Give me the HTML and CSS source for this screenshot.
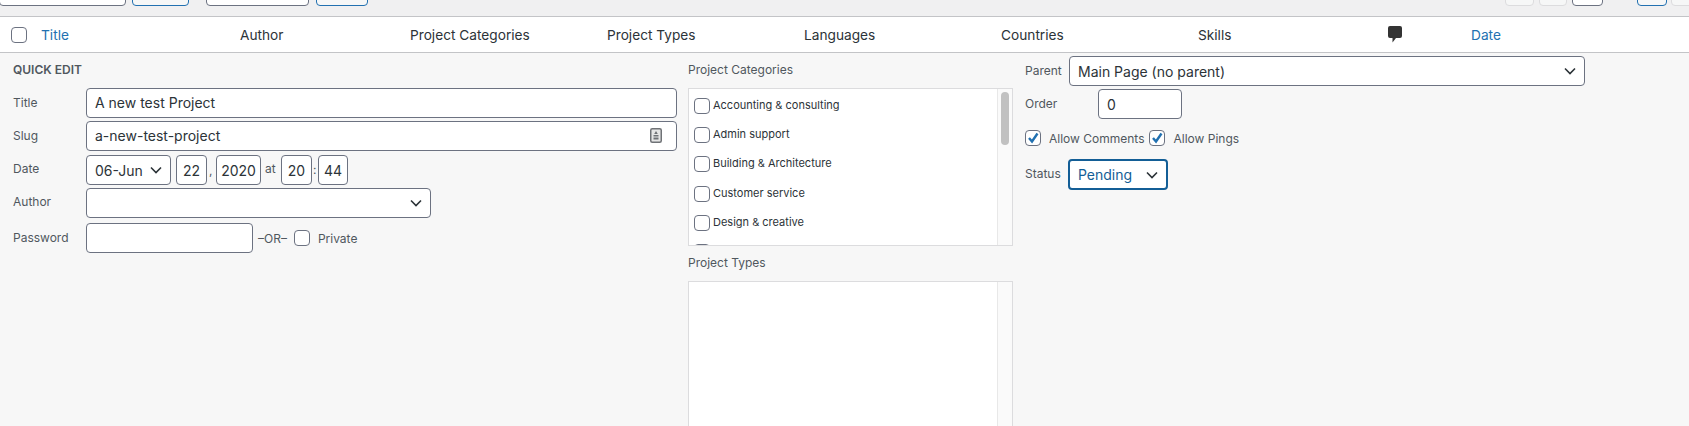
FILE: index.html
```html
<!DOCTYPE html>
<html lang="en">
<head>
    <meta charset="UTF-8">
    <meta name="viewport" content="width=device-width, initial-scale=1.0">
    <title>Projects - Quick Edit</title>
    <link rel="stylesheet" href="styles.css">
</head>
<body>
    <div class="toolbar">
        <span class="tool tool-search"></span>
        <span class="tool tool-btn tool-btn-a"></span>
        <span class="tool tool-date"></span>
        <span class="tool tool-btn tool-btn-b"></span>
        <span class="tool tool-off tool-page-a"></span>
        <span class="tool tool-off tool-page-b"></span>
        <span class="tool tool-current"></span>
        <span class="tool tool-btn tool-next"></span>
        <span class="tool tool-off tool-last"></span>
    </div>

    <div class="list-head">
        <span class="head-check"><input type="checkbox" class="check"></span>
        <a href="#" class="head-link">Title</a>
        <span>Author</span>
        <span>Project Categories</span>
        <span>Project Types</span>
        <span>Languages</span>
        <span>Countries</span>
        <span>Skills</span>
        <span class="head-comment">
            <svg width="14" height="17" viewBox="0 0 14 17"><path d="M2 0h10a2 2 0 0 1 2 2v8a2 2 0 0 1-2 2H8l-3.500 4.500V12H2a2 2 0 0 1-2-2V2a2 2 0 0 1 2-2z" fill="#333"/></svg>
        </span>
        <a href="#" class="head-link">Date</a>
    </div>

    <form class="quick-edit">
        <div class="col col-main">
            <h4 class="qe-title">QUICK EDIT</h4>
            <div class="row row-title">
                <label class="row-label">Title</label>
                <input type="text" class="field field-full" value="A new test Project">
            </div>
            <div class="row row-slug">
                <label class="row-label">Slug</label>
                <div class="slug-wrap">
                    <input type="text" class="field field-full" value="a-new-test-project">
                    <svg class="slug-icon" width="12" height="15" viewBox="0 0 12 15">
                        <rect x="0.750" y="0.750" width="10.500" height="13.500" rx="1.500" fill="#e6e6e6" stroke="#6f7276" stroke-width="1.500"/>
                        <path d="M6 3l1.800 3H4.200z" fill="#6f7276"/>
                        <rect x="3.500" y="7" width="5" height="1.500" fill="#6f7276"/>
                        <rect x="3.500" y="9.500" width="5" height="2" fill="#6f7276"/>
                    </svg>
                </div>
            </div>
            <div class="row row-date">
                <label class="row-label">Date</label>
                <select class="field select select-month"><option>06-Jun</option></select>
                <input type="text" class="field num num-day" value="22">
                <span class="sep sep-comma">,</span>
                <input type="text" class="field num num-year" value="2020">
                <span class="sep sep-at">at</span>
                <input type="text" class="field num num-hour" value="20">
                <span class="sep sep-colon">:</span>
                <input type="text" class="field num num-min" value="44">
            </div>
            <div class="row row-author">
                <label class="row-label">Author</label>
                <select class="field select select-author"></select>
            </div>
            <div class="row">
                <label class="row-label">Password</label>
                <input type="text" class="field field-pass">
                <span class="or">–OR–</span>
                <input type="checkbox" class="check">
                <span class="check-label">Private</span>
            </div>
        </div>

        <div class="col col-tax">
            <div class="tax-label">Project Categories</div>
            <div class="tax-box tax-box-top">
                <ul class="tax-list">
                    <li><input type="checkbox" class="check"><span>Accounting &amp; consulting</span></li>
                    <li><input type="checkbox" class="check"><span>Admin support</span></li>
                    <li><input type="checkbox" class="check"><span>Building &amp; Architecture</span></li>
                    <li><input type="checkbox" class="check"><span>Customer service</span></li>
                    <li><input type="checkbox" class="check"><span>Design &amp; creative</span></li>
                    <li><input type="checkbox" class="check"></li>
                </ul>
                <div class="scroll"><div class="scroll-thumb"></div></div>
            </div>
            <div class="tax-label tax-label-second">Project Types</div>
            <div class="tax-box tax-box-bottom">
                <div class="tax-list"></div>
                <div class="scroll"></div>
            </div>
        </div>

        <div class="col col-side">
            <div class="side-row side-parent">
                <label class="side-label side-label-parent">Parent</label>
                <select class="field select select-parent"><option>Main Page (no parent)</option></select>
            </div>
            <div class="side-row side-order">
                <label class="side-label side-label-order">Order</label>
                <input type="text" class="field field-order" value="0">
            </div>
            <div class="side-row side-checks">
                <input type="checkbox" class="check" checked>
                <span class="check-label label-comments">Allow Comments</span>
                <input type="checkbox" class="check" checked>
                <span class="check-label">Allow Pings</span>
            </div>
            <div class="side-row">
                <label class="side-label side-label-status">Status</label>
                <select class="field select select-status"><option>Pending</option></select>
            </div>
        </div>
    </form>
</body>
</html>
```

FILE: styles.css
```css
* {
    box-sizing: border-box;
}
html, body {
    height: 426px;
    overflow: hidden;
}
body {
    margin: 0;
    background: #f7f7f7;
    font-family: Inter, "Liberation Sans", sans-serif;
    font-size: 13.700px;
    color: #2c3338;
}

/* top toolbar, cut by the top edge */
.toolbar {
    display: flex;
    align-items: flex-end;
    height: 17px;
    padding-bottom: 10px;
    background: #f0f0f1;
    border-bottom: 1px solid #c3c4c7;
}
.tool {
    flex: none;
    height: 30px;
    border: 1px solid #6c7281;
    border-radius: 4px;
    background: #fff;
}
.tool-search { width: 127px; margin-left: -1px; }
.tool-btn {
    border-color: #2271b1;
    background: #f6f7f7;
}
.tool-btn-a { width: 57px; margin-left: 6px; }
.tool-date { width: 103px; margin-left: 17px; }
.tool-btn-b { width: 52px; margin-left: 7px; }
.tool-off {
    border-color: #dcdcde;
    background: #f6f7f7;
}
.tool-page-a { width: 29px; margin-left: 1137px; }
.tool-page-b { width: 28px; margin-left: 5px; }
.tool-current { width: 31px; margin-left: 5px; }
.tool-next { width: 30px; margin-left: 34px; }
.tool-last { width: 60px; margin-left: 4px; }

/* column headers */
.list-head {
    display: grid;
    grid-template-columns: 41px 199px 170px 197px 197px 197px 197px 190px 83px 1fr;
    align-items: center;
    height: 36px;
    background: #fff;
    border-bottom: 1px solid #c3c4c7;
}
.head-check {
    display: flex;
    padding-left: 11px;
}
.head-link {
    color: #2271b1;
    text-decoration: none;
}
.head-comment {
    display: flex;
}

/* form controls */
.field {
    height: 30px;
    padding: 0 8px;
    border: 1px solid #6c7281;
    border-radius: 4px;
    background: #fff;
    font-family: inherit;
    font-size: 14px;
    color: #2c3338;
    outline: none;
}
.select {
    appearance: none;
    padding-right: 24px;
    background-image: url("data:image/svg+xml,%3Csvg xmlns='http://www.w3.org/2000/svg' width='12' height='8' viewBox='0 0 12 8'%3E%3Cpath d='M1 1.500l5 5 5-5' fill='none' stroke='%232c3338' stroke-width='1.600'/%3E%3C/svg%3E");
    background-repeat: no-repeat;
    background-position: right 8px center;
}
.check {
    appearance: none;
    flex: none;
    width: 16px;
    height: 16px;
    margin: 0;
    border: 1px solid #6c7281;
    border-radius: 4px;
    background: #fff;
}
.check:checked {
    background-image: url("data:image/svg+xml,%3Csvg xmlns='http://www.w3.org/2000/svg' width='14' height='14' viewBox='0 0 14 14'%3E%3Cpath d='M3 7l3 3.500 5.500-8' fill='none' stroke='%232271b1' stroke-width='2.400'/%3E%3C/svg%3E");
    background-repeat: no-repeat;
    background-position: center;
}
.check-label {
    margin-left: 8px;
    font-size: 12px;
    color: #50575e;
}

/* quick edit panel */
.quick-edit {
    display: flex;
    height: 373px;
    overflow: hidden;
}
.col-main {
    flex: none;
    width: 664px;
    margin-left: 13px;
    padding-top: 9px;
}
.qe-title {
    margin: 0 0 11px;
    height: 15px;
    line-height: 15px;
    font-size: 12px;
    font-weight: 600;
    color: #50575e;
}
.row {
    display: flex;
    align-items: center;
    margin-bottom: 3px;
}
.row-slug { margin-bottom: 4px; }
.row-author { margin-bottom: 5px; }
.row-label {
    flex: none;
    width: 73px;
    padding-bottom: 2px;
    font-size: 12px;
    color: #50575e;
}
.row-date .row-label { padding-bottom: 3px; }
.row-author .row-label { padding-bottom: 4px; }
.field-full {
    width: 100%;
    padding-bottom: 2px;
}
.slug-wrap {
    position: relative;
    flex: 1;
}
.slug-icon {
    position: absolute;
    top: 7px;
    right: 15px;
}
.select-month { width: 85px; }
.num {
    padding: 0;
    text-align: center;
}
.num-day { width: 31px; margin-left: 5px; }
.num-year { width: 45px; }
.num-hour { width: 31px; }
.num-min { width: 30px; }
.sep {
    font-size: 12px;
    color: #50575e;
}
.sep-comma { width: 9px; padding-left: 2px; }
.sep-at { width: 20px; padding-left: 4px; padding-bottom: 4px; }
.sep-colon { width: 6px; padding-left: 1px; padding-bottom: 2px; }
.select-author { width: 345px; }
.field-pass { width: 167px; }
.or {
    margin: 0 7px 0 5px;
    font-size: 12px;
    color: #50575e;
}

/* taxonomy columns */
.col-tax {
    flex: none;
    width: 325px;
    margin-left: 11px;
    padding-top: 9px;
}
.tax-label {
    height: 15px;
    line-height: 15px;
    font-size: 12px;
    color: #50575e;
}
.tax-label-second { margin-top: 9px; }
.tax-box {
    display: flex;
    margin-top: 11px;
    border: 1px solid #dcdcde;
    overflow: hidden;
}
.tax-box-top { height: 158px; }
.tax-box-bottom { height: 200px; }
.tax-list {
    flex: 1;
    margin: 0;
    padding: 9px 0 0 5px;
    list-style: none;
    background: #fff;
}
.tax-list li {
    display: flex;
    align-items: center;
    gap: 3px;
    height: 16px;
    margin-bottom: 13px;
    font-size: 11px;
    color: #2c3338;
}
.tax-list li:nth-child(3) {
    margin-bottom: 14px;
}
.tax-list li span {
    padding-bottom: 2px;
}
.scroll {
    flex: none;
    width: 15px;
    padding: 3px 3px 0 3px;
    background: #fafafa;
    border-left: 1px solid #e8e8e8;
}
.scroll-thumb {
    width: 8px;
    height: 53px;
    border-radius: 4px;
    background: #c1c1c1;
}

/* right column */
.col-side {
    flex: none;
    width: 560px;
    margin-left: 12px;
    padding-top: 3px;
}
.side-row {
    display: flex;
    align-items: center;
}
.side-parent { margin-bottom: 3px; }
.side-order { margin-bottom: 11px; }
.side-checks { margin-bottom: 13px; }
.side-label {
    flex: none;
    width: 44px;
    font-size: 12px;
    color: #50575e;
}
.side-label-parent { padding-bottom: 2px; }
.side-label-order { width: 73px; padding-bottom: 1px; }
.side-label-status { width: 43px; padding-bottom: 2px; }
.select-parent { width: 516px; }
.field-order { width: 84px; }
.label-comments { margin-right: 5px; }
.select-status {
    width: 100px;
    height: 31px;
    border: 2px solid #135e96;
    color: #135e96;
}
```
